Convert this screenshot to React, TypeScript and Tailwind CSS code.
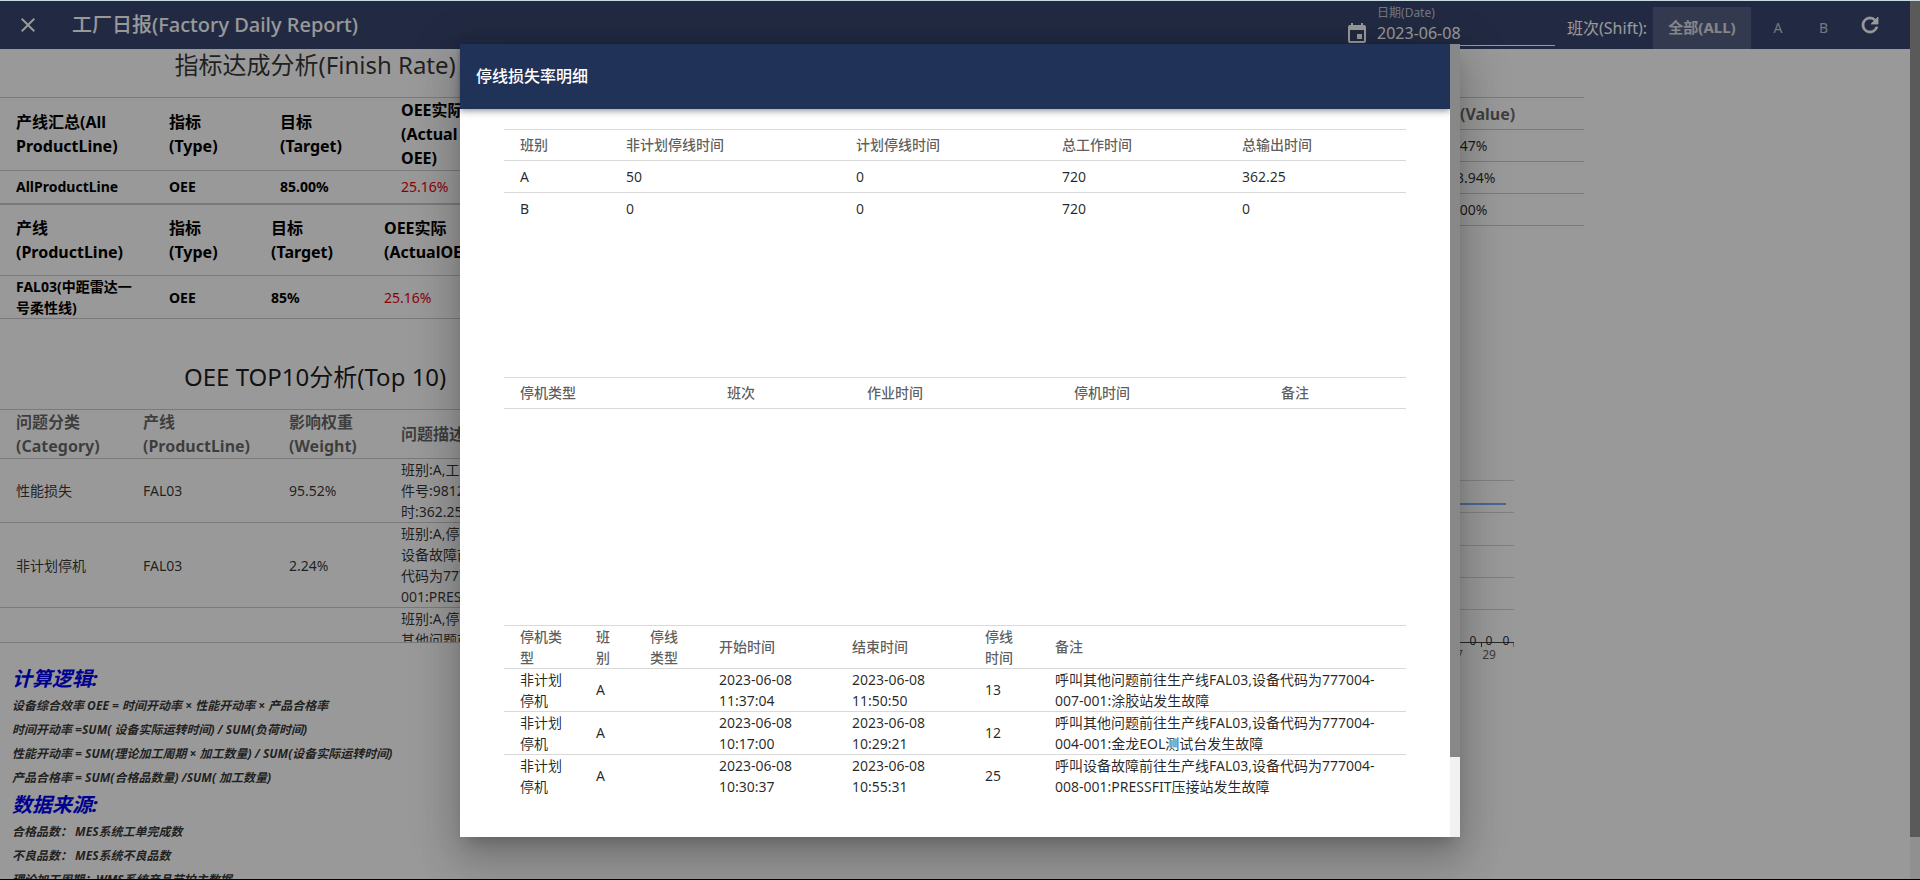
import { MdClose, MdEvent } from 'react-icons/md';

const stopSummary = [
  ['A', '50', '0', '720', '362.25'],
  ['B', '0', '0', '720', '0'],
];

const stopDetails = [
  {
    start: '2023-06-08 11:37:04',
    end: '2023-06-08 11:50:50',
    minutes: 13,
    remark: '呼叫其他问题前往生产线FAL03,设备代码为777004-007-001:涂胶站发生故障',
  },
  {
    start: '2023-06-08 10:17:00',
    end: '2023-06-08 10:29:21',
    minutes: 12,
    remark: '呼叫其他问题前往生产线FAL03,设备代码为777004-004-001:金龙EOL测试台发生故障',
  },
  {
    start: '2023-06-08 10:30:37',
    end: '2023-06-08 10:55:31',
    minutes: 25,
    remark: '呼叫设备故障前往生产线FAL03,设备代码为777004-008-001:PRESSFIT压接站发生故障',
  },
];

const topIssues = [
  { category: '性能损失', line: 'FAL03', weight: '95.52%', lines: ['班别:A,工', '件号:9812', '时:362.25'] },
  {
    category: '非计划停机',
    line: 'FAL03',
    weight: '2.24%',
    lines: ['班别:A,停', '设备故障前', '代码为777', '001:PRESS'],
  },
];

const formulas = [
  '设备综合效率 OEE = 时间开动率 × 性能开动率 × 产品合格率',
  '时间开动率 =SUM( 设备实际运转时间) / SUM(负荷时间)',
  '性能开动率 = SUM(理论加工周期 × 加工数量) / SUM(设备实际运转时间)',
  '产品合格率 = SUM(合格品数量) /SUM( 加工数量)',
];

const sources = ['合格品数： MES系统工单完成数', '不良品数： MES系统不良品数', '理论加工周期：WMS系统产品节拍主数据'];

function RefreshIcon() {
  return (
    <svg viewBox="0 0 24 24" className="h-6 w-6" fill="currentColor" stroke="currentColor" strokeWidth="0.8">
      <path d="M17.65 6.35A7.958 7.958 0 0 0 12 4c-4.42 0-7.99 3.58-7.99 8s3.57 8 7.99 8c3.73 0 6.84-2.55 7.73-6h-2.08A5.99 5.99 0 0 1 12 18c-3.31 0-6-2.69-6-6s2.69-6 6-6c1.66 0 3.14.69 4.22 1.78L13 11h7V4l-2.35 2.35z" />
    </svg>
  );
}

function TopBar() {
  return (
    <header className="flex h-12 shrink-0 items-center bg-[#38466f] text-white">
      <button aria-label="关闭" className="ml-4 text-2xl">
        <MdClose />
      </button>
      <h1 className="ml-8 text-xl font-medium">工厂日报(Factory Daily Report)</h1>
      <div className="ml-auto flex h-full items-center">
        <div className="flex h-full items-end pb-[3px]">
          <MdEvent className="mr-2 text-2xl" />
          <div className="flex h-[45px] w-[178px] flex-col border-b border-white">
            <label htmlFor="date" className="pt-1 text-xs leading-4 text-white/70">
              日期(Date)
            </label>
            <input id="date" defaultValue="2023-06-08" className="w-full text-base leading-6 outline-none" />
          </div>
        </div>
        <span className="ml-3 pt-1.5">班次(Shift):</span>
        <div className="ml-1.5 flex h-[42px] self-end text-sm">
          <button className="w-[98px] bg-white/15 text-[15px] font-bold text-white/80">全部(ALL)</button>
          <button className="w-[54px] text-white/70">A</button>
          <button className="w-[37px] text-white/70">B</button>
        </div>
        <button aria-label="刷新" className="mr-7 ml-4">
          <RefreshIcon />
        </button>
      </div>
    </header>
  );
}

function FinishRate() {
  return (
    <section>
      <h2 className="pb-4 text-center text-2xl leading-8 text-black/80">指标达成分析(Finish Rate)</h2>
      <table className="w-full table-fixed border-y border-black/20 text-left">
        <thead>
          <tr className="h-[71px] border-b border-black/20 leading-6">
            <th className="w-[153px] pl-4 font-bold">产线汇总(All ProductLine)</th>
            <th className="w-[111px] pl-4 font-bold">指标<br />(Type)</th>
            <th className="w-[121px] pl-4 font-bold">目标<br />(Target)</th>
            <th className="pl-4 font-bold">OEE实际<br />(Actual<br />OEE)</th>
          </tr>
        </thead>
        <tbody>
          <tr className="h-[33px] text-sm font-bold">
            <td className="pl-4">AllProductLine</td>
            <td className="pl-4">OEE</td>
            <td className="pl-4">85.00%</td>
            <td className="pl-4 font-normal text-red-600">25.16%</td>
          </tr>
        </tbody>
      </table>
      <table className="w-full table-fixed border-y border-black/20 text-left">
        <thead>
          <tr className="h-[71px] border-b border-black/20 leading-6">
            <th className="w-[153px] pl-4 font-bold">产线<br />(ProductLine)</th>
            <th className="w-[102px] pl-4 font-bold">指标<br />(Type)</th>
            <th className="w-[113px] pl-4 font-bold">目标<br />(Target)</th>
            <th className="pl-4 font-bold">OEE实际<br />(ActualOEE)</th>
          </tr>
        </thead>
        <tbody>
          <tr className="text-sm leading-[21px] font-bold">
            <td className="pl-4">FAL03(中距雷达一<br />号柔性线)</td>
            <td className="pl-4">OEE</td>
            <td className="pl-4">85%</td>
            <td className="pl-4 font-normal text-red-600">25.16%</td>
          </tr>
        </tbody>
      </table>
    </section>
  );
}

function TopTen() {
  return (
    <section className="pt-[42px]">
      <h2 className="pb-4 text-center text-2xl leading-8 text-black/90">OEE TOP10分析(Top 10)</h2>
      <div className="h-[234px] overflow-hidden border-y border-black/20">
        <table className="w-full table-fixed text-left">
          <thead>
            <tr className="border-b border-black/20 leading-6 text-black/60">
              <th className="w-[127px] pl-4 font-bold">问题分类<br />(Category)</th>
              <th className="w-[146px] pl-4 font-bold">产线<br />(ProductLine)</th>
              <th className="w-[112px] pl-4 font-bold">影响权重<br />(Weight)</th>
              <th className="pl-4 font-bold">问题描述</th>
            </tr>
          </thead>
          <tbody className="text-sm leading-[21px] text-black/80">
            {topIssues.map((issue) => (
              <tr key={issue.category} className="border-b border-black/20">
                <td className="pl-4">{issue.category}</td>
                <td className="pl-4">{issue.line}</td>
                <td className="pl-4">{issue.weight}</td>
                <td className="pl-4">
                  {issue.lines.map((line) => (
                    <div key={line}>{line}</div>
                  ))}
                </td>
              </tr>
            ))}
            <tr className="h-[105px]">
              <td colSpan={3} />
              <td className="pl-4 align-top">班别:A,停<br />其他问题前</td>
            </tr>
          </tbody>
        </table>
      </div>
    </section>
  );
}

function Notes() {
  return (
    <section className="pt-[21px] pl-3 text-xs leading-6 font-bold whitespace-nowrap italic text-black/80">
      <h3 className="text-xl leading-[30px] text-[#0000ee]">计算逻辑:</h3>
      {formulas.map((text) => (
        <p key={text}>{text}</p>
      ))}
      <h3 className="text-xl leading-[30px] text-[#0000ee]">数据来源:</h3>
      {sources.map((text) => (
        <p key={text}>{text}</p>
      ))}
    </section>
  );
}

function RateTable() {
  return (
    <table className="w-full table-fixed border-y border-black/20 text-left">
      <thead>
        <tr className="h-8 border-b border-black/20 leading-6 text-black/60">
          <th className="pl-[170px] font-bold">值(Value)</th>
        </tr>
      </thead>
      <tbody className="text-sm text-black/85">
        {['26.47%', '103.94%', '85.00%'].map((value) => (
          <tr key={value} className="h-8 border-b border-black/20">
            <td className="pl-[166px]">{value}</td>
          </tr>
        ))}
      </tbody>
    </table>
  );
}

function TrendChart() {
  return (
    <svg width="240" height="200" className="mt-[244px]" fontSize="12" textAnchor="middle" fill="#333">
      {[10, 42, 75, 107, 139].map((y) => (
        <path key={y} d={`M0 ${y}.5H240`} stroke="#d6d6d6" />
      ))}
      <path d="M0 34H232" stroke="#7aaef0" strokeWidth="2" />
      <path d="M0 172.5H240M207.5 172V177M240 172V177" stroke="#444" />
      {[199, 215, 232].map((x) => (
        <text key={x} x={x} y="175">0</text>
      ))}
      <text x="182" y="189" fill="#666">27</text>
      <text x="215" y="189" fill="#666">29</text>
    </svg>
  );
}

function StopDialog() {
  const head = 'h-[31px] border-y border-black/15 text-black/65';
  return (
    <div
      role="dialog"
      aria-label="停线损失率明细"
      className="flex max-h-[92%] w-[1000px] bg-white text-sm leading-[21px] text-black/85 shadow-[0_11px_15px_-7px_rgba(0,0,0,0.2),0_24px_38px_3px_rgba(0,0,0,0.14),0_9px_46px_8px_rgba(0,0,0,0.12)]"
    >
      <div className="min-w-0 flex-1">
        <div className="flex h-[65px] items-center bg-[#213259] px-4 text-base font-medium text-white shadow-[0_2px_4px_-1px_rgba(0,0,0,0.2),0_4px_5px_0_rgba(0,0,0,0.14),0_1px_10px_0_rgba(0,0,0,0.12)]">
          停线损失率明细
        </div>
        <div className="px-11 pt-5 pb-10">
          <div className="min-h-[248px]">
            <table className="w-full table-fixed text-left">
              <thead>
                <tr className={head}>
                  <th className="w-[106px] pl-4 font-medium">班别</th>
                  <th className="w-[230px] pl-4 font-medium">非计划停线时间</th>
                  <th className="w-[206px] pl-4 font-medium">计划停线时间</th>
                  <th className="w-[180px] pl-4 font-medium">总工作时间</th>
                  <th className="w-[180px] pl-4 font-medium">总输出时间</th>
                </tr>
              </thead>
              <tbody>
                {stopSummary.map((row) => (
                  <tr key={row[0]} className="h-8 border-b border-black/15 last:border-b-0">
                    {row.map((cell, i) => (
                      <td key={i} className="pl-4">{cell}</td>
                    ))}
                  </tr>
                ))}
              </tbody>
            </table>
          </div>
          <div className="min-h-[248px]">
            <table className="w-full table-fixed text-left">
              <thead>
                <tr className={head}>
                  <th className="w-[207px] pl-4 font-medium">停机类型</th>
                  <th className="w-[140px] pl-4 font-medium">班次</th>
                  <th className="w-[207px] pl-4 font-medium">作业时间</th>
                  <th className="w-[207px] pl-4 font-medium">停机时间</th>
                  <th className="w-[141px] pl-4 font-medium">备注</th>
                </tr>
              </thead>
            </table>
          </div>
          <table className="w-full table-fixed text-left">
            <thead>
              <tr className={head}>
                <th className="w-[76px] px-4 font-medium">停机类型</th>
                <th className="w-[54px] px-4 font-medium">班别</th>
                <th className="w-[69px] px-4 font-medium">停线类型</th>
                <th className="w-[133px] px-4 font-medium">开始时间</th>
                <th className="w-[133px] px-4 font-medium">结束时间</th>
                <th className="w-[70px] px-4 font-medium">停线时间</th>
                <th className="w-[367px] px-4 font-medium">备注</th>
              </tr>
            </thead>
            <tbody>
              {stopDetails.map((row) => (
                <tr key={row.start} className="border-b border-black/15 last:border-b-0">
                  <td className="px-4">非计划停机</td>
                  <td className="px-4">A</td>
                  <td />
                  <td className="px-4">{row.start}</td>
                  <td className="px-4">{row.end}</td>
                  <td className="px-4">{row.minutes}</td>
                  <td className="px-4">{row.remark}</td>
                </tr>
              ))}
            </tbody>
          </table>
        </div>
      </div>
      {/* scroll track */}
      <div className="w-2.5 bg-[#f1f1f1]">
        <div className="h-[90%] bg-[#888]" />
      </div>
    </div>
  );
}

export default function App() {
  return (
    <div className="flex h-screen flex-col overflow-hidden border-t border-b border-t-[#c8dbe2] border-b-black bg-white font-['Noto_Sans','Noto_Sans_CJK_SC',sans-serif] text-black">
      <div className="relative flex min-h-0 flex-1">
        <div className="flex min-w-0 flex-1 flex-col overflow-hidden">
          <TopBar />
          <main className="flex min-h-0 flex-1 justify-between">
            <div className="w-[33%]">
              <FinishRate />
              <TopTen />
              <Notes />
            </div>
            <div className="mr-[326px] w-[310px] pt-12">
              <RateTable />
              <TrendChart />
            </div>
          </main>
        </div>
        <div className="w-2.5 bg-[#f1f1f1] pb-[42px]">
          <div className="h-full bg-[#979797]" />
        </div>
        <div className="absolute inset-0 flex items-center justify-center bg-black/40">
          <StopDialog />
        </div>
      </div>
    </div>
  );
}
